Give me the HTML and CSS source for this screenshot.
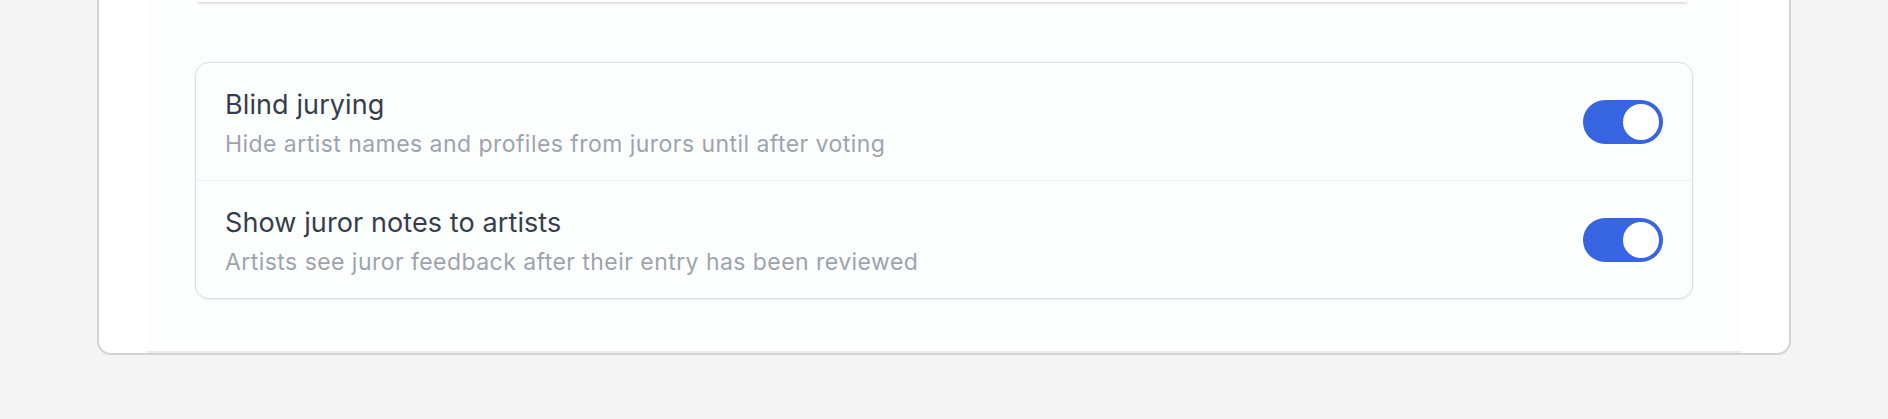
FILE: index.html
```html
<!DOCTYPE html>
<html lang="en">
<head>
<meta charset="utf-8">
<title>Jurying settings</title>
<link rel="stylesheet" href="styles.css">
</head>
<body>
  <div class="shell">
    <div class="content">
      <div class="prev-card"></div>
      <div class="settings-card">
        <div class="setting-row">
          <div class="setting-text">
            <div class="setting-title">Blind jurying</div>
            <div class="setting-desc">Hide artist names and profiles from jurors until after voting</div>
          </div>
          <div class="toggle is-on" role="switch" aria-checked="true"><span class="knob"></span></div>
        </div>
        <div class="setting-row">
          <div class="setting-text">
            <div class="setting-title">Show juror notes to artists</div>
            <div class="setting-desc">Artists see juror feedback after their entry has been reviewed</div>
          </div>
          <div class="toggle is-on" role="switch" aria-checked="true"><span class="knob"></span></div>
        </div>
      </div>
    </div>
  </div>
</body>
</html>
```
FILE: styles.css
```css
html, body {
  margin: 0;
  padding: 0;
}
body {
  background: #f4f4f4;
  font-family: Inter, "Noto Sans", "Liberation Sans", sans-serif;
  width: 1888px;
  height: 419px;
  overflow: hidden;
}
.shell {
  margin: 0 97px;
  background: #ffffff;
  border: 2px solid #d3d3d3;
  border-top: none;
  border-radius: 0 0 14px 14px;
  padding: 0 47px;
}
.content {
  background: #fcfefd;
  padding: 0 49px 52px;
  border-bottom: 2px solid #ececec;
}
.prev-card {
  height: 2px;
  margin: 0 6px 0 3px;
  background: #ffffff;
  border-radius: 0 0 12px 12px;
  box-shadow: 0 1px 3px rgba(0, 0, 0, 0.24);
}
.settings-card {
  margin-top: 60px;
  border: 1.5px solid #dcdee4;
  border-radius: 14px;
  background: #fcfefd;
  box-shadow: 0 1px 2px rgba(0, 0, 0, 0.06);
}
.setting-row {
  display: flex;
  align-items: center;
  justify-content: space-between;
  padding: 25px 29px 21px 29px;
}
.setting-row + .setting-row {
  border-top: 1px solid #eeeff0;
}
.setting-title {
  font-size: 27px;
  line-height: 34px;
  color: #353d4d;
  letter-spacing: 0.1px;
}
.setting-desc {
  margin-top: 7px;
  font-size: 23px;
  line-height: 30px;
  color: #9ea3ae;
  letter-spacing: 0.45px;
}
.toggle {
  width: 80px;
  height: 44px;
  border-radius: 22px;
  background: #3764e1;
  display: flex;
  align-items: center;
  justify-content: flex-end;
  padding: 0 4px;
  box-sizing: border-box;
  margin-top: -4px;
  flex: none;
}
.knob {
  width: 36px;
  height: 36px;
  border-radius: 50%;
  background: #ffffff;
}
```
